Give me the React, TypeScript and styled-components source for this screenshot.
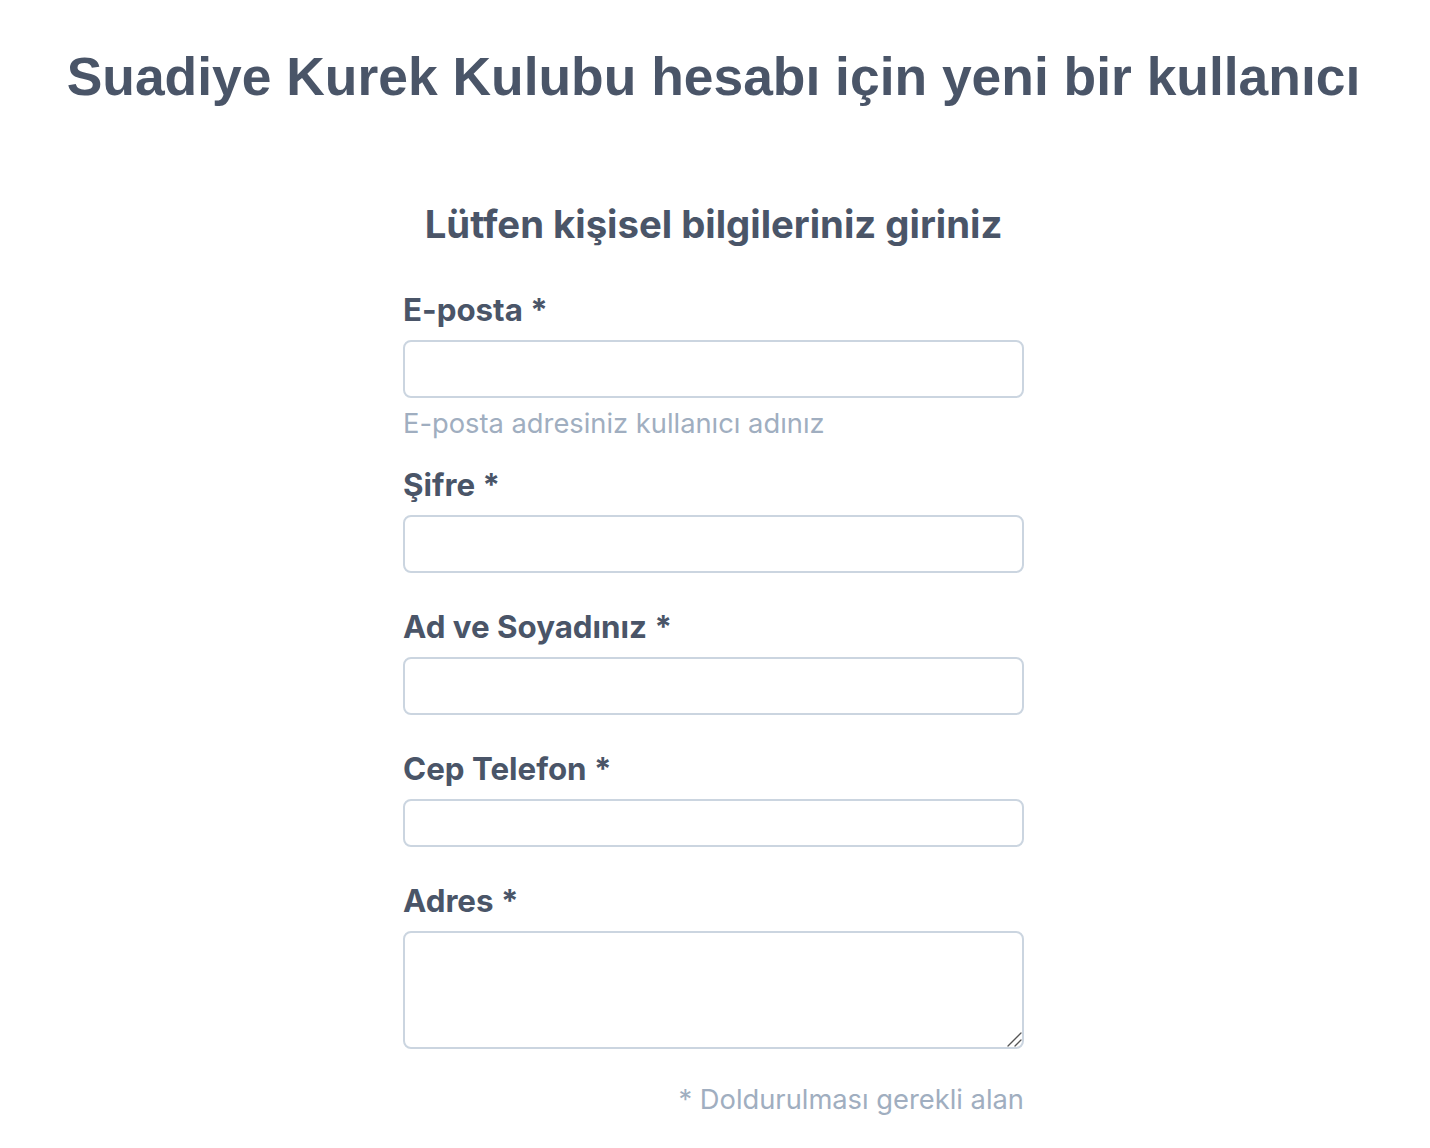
import * as React from "react"
import styled, { createGlobalStyle } from "styled-components"

const GlobalStyle = createGlobalStyle`
    html, body {
        margin: 0;
        padding: 0;
        background: #fff;
        color: #4a5568;
        font-family: Inter, "Noto Sans", sans-serif;
    }
`

const Page = styled.main`
    display: flex;
    flex-direction: column;
    align-items: center;
    padding: 45px 3px 40px 0;
`

const Title = styled.h1`
    margin: 0;
    font-family: "Liberation Sans", Arial, sans-serif;
    font-size: 53.4px;
    line-height: 64px;
    font-weight: 700;
    color: #4a5568;
    text-align: center;
`

const Form = styled.form`
    display: flex;
    flex-direction: column;
    width: 621px;
    margin-top: 93px;
`

const Subtitle = styled.h2`
    margin: 0 0 10px;
    font-size: 38.3px;
    line-height: 44px;
    font-weight: 700;
    text-align: center;
`

const Field = styled.div`
    display: flex;
    flex-direction: column;
    margin-top: 34px;
`

const Label = styled.label`
    font-size: 31.3px;
    line-height: 40px;
    font-weight: 700;
    margin-bottom: 10px;
`

const Input = styled.input<{ $height?: number }>`
    box-sizing: border-box;
    width: 100%;
    height: ${(p) => p.$height ?? 58}px;
    padding: 0 16px;
    border: 2px solid #cbd5e0;
    border-radius: 8px;
    background: #fff;
    font: inherit;
    font-size: 27px;
    color: #4a5568;
    outline: none;
`

const TextArea = styled.textarea`
    box-sizing: border-box;
    width: 100%;
    height: 118px;
    padding: 12px 16px;
    border: 2px solid #cbd5e0;
    border-radius: 8px;
    background: #fff;
    font: inherit;
    font-size: 27px;
    color: #4a5568;
    outline: none;
    resize: vertical;

    &::-webkit-resizer {
        background: url("data:image/svg+xml,%3Csvg xmlns='http://www.w3.org/2000/svg' width='16' height='16' viewBox='0 0 16 16'%3E%3Cpath d='M2 15L15 2M9 15L15 9' stroke='%23555' stroke-width='1.3' stroke-linecap='round' fill='none'/%3E%3C/svg%3E") no-repeat right bottom;
        background-size: 16px 16px;
    }
`

const Hint = styled.p`
    margin: 10px 0 -9px;
    font-size: 27.3px;
    line-height: 32px;
    font-weight: 400;
    color: #a0aec0;
`

const Note = styled.p`
    margin: 35px 0 0;
    font-size: 27.3px;
    line-height: 32px;
    color: #a0aec0;
    text-align: right;
`

export default function App() {
    return (
        <>
            <GlobalStyle />
            <Page>
                <Title>Suadiye Kurek Kulubu hesabı için yeni bir kullanıcı</Title>
                <Form>
                    <Subtitle>Lütfen kişisel bilgileriniz giriniz</Subtitle>
                    <Field>
                        <Label htmlFor="email">E-posta *</Label>
                        <Input id="email" type="email" />
                        <Hint>E-posta adresiniz kullanıcı adınız</Hint>
                    </Field>
                    <Field>
                        <Label htmlFor="password">Şifre *</Label>
                        <Input id="password" type="password" />
                    </Field>
                    <Field>
                        <Label htmlFor="name">Ad ve Soyadınız *</Label>
                        <Input id="name" type="text" />
                    </Field>
                    <Field>
                        <Label htmlFor="phone">Cep Telefon *</Label>
                        <Input id="phone" type="tel" $height={48} />
                    </Field>
                    <Field>
                        <Label htmlFor="address">Adres *</Label>
                        <TextArea id="address" />
                    </Field>
                    <Note>* Doldurulması gerekli alan</Note>
                </Form>
            </Page>
        </>
    )
}
